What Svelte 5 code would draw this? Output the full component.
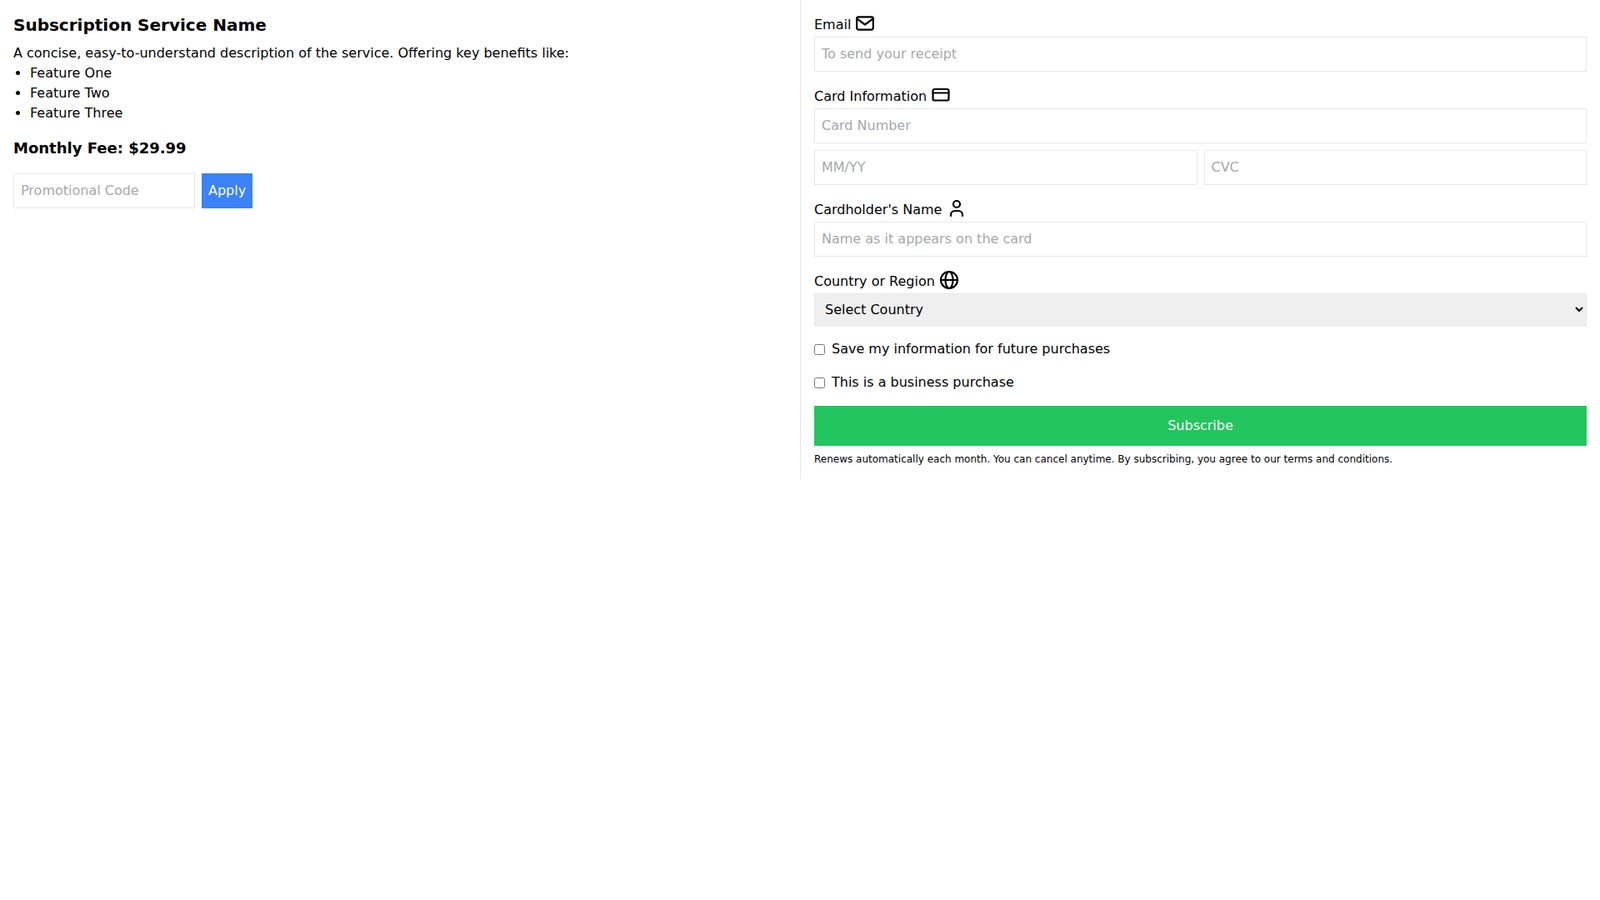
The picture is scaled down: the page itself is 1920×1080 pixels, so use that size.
<script>
  const features = ['Feature One', 'Feature Two', 'Feature Three'];
</script>

<div class="page">
  <section class="summary">
    <h1>Subscription Service Name</h1>
    <p class="desc">A concise, easy-to-understand description of the service. Offering key benefits like:</p>
    <ul>
      {#each features as f}
        <li>{f}</li>
      {/each}
    </ul>
    <h2>Monthly Fee: $29.99</h2>
    <div class="promo">
      <input class="promo-input" type="text" placeholder="Promotional Code" />
      <button class="apply" type="button">Apply</button>
    </div>
  </section>

  <form class="checkout" onsubmit={(e) => e.preventDefault()}>
    <div class="field">
      <label for="email">Email
        <svg class="icon" width="24" height="24" viewBox="0 0 24 24" fill="none" stroke="currentColor" stroke-width="2.2" stroke-linecap="round" stroke-linejoin="round"><rect x="2.2" y="4.4" width="19.6" height="15.2" rx="2"/><path d="M2.6 6.6l9.4 6.9 9.4-6.9"/></svg>
      </label>
      <input id="email" type="email" placeholder="To send your receipt" />
    </div>

    <div class="field">
      <label for="card">Card Information
        <svg class="icon" width="24" height="24" viewBox="0 0 24 24" fill="none" stroke="currentColor" stroke-width="2.2" stroke-linecap="round" stroke-linejoin="round"><rect x="2.5" y="5" width="19" height="13.5" rx="2"/><path d="M2.5 9.5h19"/></svg>
      </label>
      <input id="card" type="text" placeholder="Card Number" />
      <div class="split">
        <input type="text" placeholder="MM/YY" />
        <input type="text" placeholder="CVC" />
      </div>
    </div>

    <div class="field">
      <label for="name">Cardholder's Name
        <svg class="icon" width="24" height="24" viewBox="0 0 24 24" fill="none" stroke="currentColor" stroke-width="2.2" stroke-linecap="round" stroke-linejoin="round"><circle cx="12" cy="7" r="4"/><path d="M5 21v-1a5 5 0 0 1 5-5h4a5 5 0 0 1 5 5v1"/></svg>
      </label>
      <input id="name" type="text" placeholder="Name as it appears on the card" />
    </div>

    <div class="field">
      <label for="country">Country or Region
        <svg class="icon" width="24" height="24" viewBox="0 0 24 24" fill="none" stroke="currentColor" stroke-width="2.2" stroke-linecap="round" stroke-linejoin="round"><circle cx="12" cy="12" r="10"/><path d="M2 12h20"/><ellipse cx="12" cy="12" rx="4.5" ry="10"/></svg>
      </label>
      <select id="country">
        <option>Select Country</option>
      </select>
    </div>

    <div class="check">
      <input id="save" type="checkbox" />
      <label for="save">Save my information for future purchases</label>
    </div>
    <div class="check">
      <input id="biz" type="checkbox" />
      <label for="biz">This is a business purchase</label>
    </div>

    <button class="subscribe" type="submit">Subscribe</button>
    <p class="note">Renews automatically each month. You can cancel anytime. By subscribing, you agree to our terms and conditions.</p>
  </form>
</div>

<style>
  :global(body) {
    margin: 0;
    background: #fff;
    color: #000;
    font-family: "DejaVu Sans", sans-serif;
    font-size: 16px;
    line-height: 24px;
  }
  * { box-sizing: border-box; }
  .page {
    display: grid;
    grid-template-columns: 1fr 1fr;
    align-items: start;
  }
  .summary { padding: 16px; }
  h1 { margin: 0 0 8px; font-size: 20px; line-height: 28px; font-weight: 700; }
  .desc { margin: 0; }
  ul { margin: 0 0 16px; padding: 0 0 0 20px; list-style: disc; }
  h2 { margin: 0 0 16px; font-size: 18px; line-height: 28px; font-weight: 700; }
  .promo { display: flex; gap: 8px; }
  input[type="text"], input[type="email"] {
    font: inherit;
    line-height: normal;
    height: 42px;
    padding: 7px 8px 9px;
    border: 1px solid #e5e7eb;
    border-radius: 0;
    background: #fff;
    color: #000;
    width: 100%;
    display: block;
    outline: none;
  }
  input::placeholder { color: #a6a8ac; opacity: 1; }
  .promo-input.promo-input { width: 218px; }
  .apply {
    font: inherit;
    line-height: 24px;
    border: 0;
    padding: 8px;
    background: #3b82f6;
    color: #fff;
    border-radius: 0;
  }
  .checkout {
    border-left: 1px solid #e5e7eb;
    padding: 16px;
  }
  .field { margin-bottom: 16px; }
  .field > label { display: block; height: 28px; }
  .icon { display: inline-block; vertical-align: -5px; }
  .split { display: flex; gap: 8px; margin-top: 8px; }
  select {
    display: block;
    width: 100%;
    height: 39px;
    font: inherit;
    padding: 8px;
    border: 1px solid #e5e7eb;
    border-radius: 0;
    color: #000;
    background-color: #efefef;
  }
  .check { display: flex; align-items: center; margin-bottom: 16px; height: 24px; }
  .check input { margin: 0 8px 0 0; }
  .subscribe {
    display: block;
    width: 100%;
    height: 48px;
    font: inherit;
    border: 0;
    border-radius: 0;
    background: #22c55e;
    color: #fff;
  }
  .note { margin: 8px 0 0; font-size: 12px; line-height: 16px; }
</style>
